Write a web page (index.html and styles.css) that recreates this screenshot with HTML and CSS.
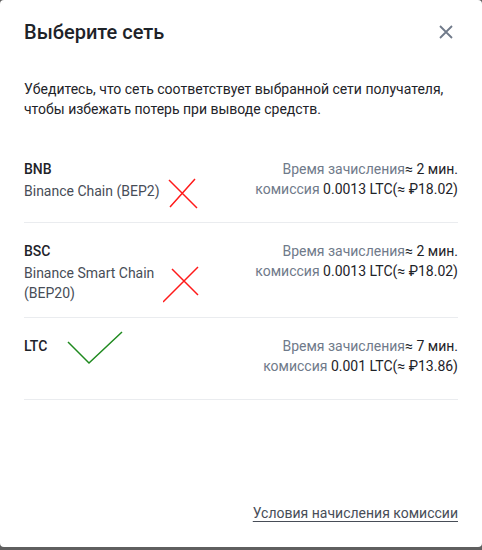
FILE: index.html
```html
<!DOCTYPE html>
<html lang="ru">
<head>
<meta charset="utf-8">
<link rel="stylesheet" href="styles.css">
</head>
<body>
<div class="modal">
  <div class="header">
    <h1 class="title">Выберите сеть</h1>
    <svg class="close" width="16" height="16" viewBox="0 0 16 16"><path d="M2 2L14 14M14 2L2 14" stroke="#707a8a" stroke-width="1.8" fill="none"/></svg>
  </div>
  <p class="note">Убедитесь, что сеть соответствует выбранной сети получателя, чтобы избежать потерь при выводе средств.</p>
  <div class="list">
    <div class="row">
      <div class="left">
        <div class="name">BNB</div>
        <div class="desc">Binance Chain (BEP2)</div>
      </div>
      <div class="right">
        <div class="line"><span class="muted">Время зачисления</span>≈ 2 мин.</div>
        <div class="line"><span class="muted">комиссия</span> 0.0013 LTC(≈ ₽18.02)</div>
      </div>
      <svg class="mark mark-x1" width="40" height="40" viewBox="0 0 40 40"><path d="M4 3L32 31M30 2L5 30" stroke="#ff1a1a" stroke-width="1.5" fill="none"/></svg>
    </div>
    <div class="row">
      <div class="left">
        <div class="name">BSC</div>
        <div class="desc">Binance Smart Chain<br>(BEP20)</div>
      </div>
      <div class="right">
        <div class="line"><span class="muted">Время зачисления</span>≈ 2 мин.</div>
        <div class="line"><span class="muted">комиссия</span> 0.0013 LTC(≈ ₽18.02)</div>
      </div>
      <svg class="mark mark-x2" width="40" height="40" viewBox="0 0 40 40"><path d="M9 4L35 30M35 2L0 37" stroke="#ff1a1a" stroke-width="1.5" fill="none"/></svg>
    </div>
    <div class="row">
      <div class="left">
        <div class="name">LTC</div>
      </div>
      <div class="right">
        <div class="line"><span class="muted">Время зачисления</span>≈ 7 мин.</div>
        <div class="line"><span class="muted">комиссия</span> 0.001 LTC(≈ ₽13.86)</div>
      </div>
      <svg class="mark mark-v" width="60" height="40" viewBox="0 0 60 40"><path d="M2 12L23 33L56 2" stroke="#1f8a1f" stroke-width="1.5" fill="none"/></svg>
    </div>
  </div>
  <div class="footer">
    <a class="link" href="#">Условия начисления комиссии</a>
  </div>
</div>
</body>
</html>
```

FILE: styles.css
```css
* { box-sizing: border-box; }
html, body { margin: 0; padding: 0; }
body {
  background: #5f5f5f;
  width: 482px;
  height: 550px;
  overflow: hidden;
  font-family: Roboto, "Noto Sans", sans-serif;
  color: #1e2329;
}
.modal {
  background: #fff;
  width: 482px;
  height: 547px;
  border-radius: 4px;
  padding: 0 24px;
  display: flex;
  flex-direction: column;
}
.header {
  display: flex;
  justify-content: space-between;
  align-items: center;
  height: 64px;
}
.title {
  margin: 0;
  font-size: 20px;
  font-weight: 500;
  line-height: 28px;
  color: #1e2329;
}
.close { margin-right: 4px; }
.note {
  margin: 15px 0 0;
  font-size: 14px;
  line-height: 20px;
  color: #1e2329;
}
.list { margin-top: 22px; }
.row {
  position: relative;
  display: flex;
  justify-content: space-between;
  min-height: 82px;
  padding: 18px 0 14px;
  border-bottom: 1px solid #eaecef;
}
.name {
  font-size: 14px;
  font-weight: 500;
  line-height: 20px;
}
.desc {
  margin-top: 2px;
  font-size: 14px;
  line-height: 20px;
  color: #474d57;
}
.right {
  text-align: right;
  font-size: 14px;
  line-height: 20px;
}
.muted { color: #707a8a; }
.mark { position: absolute; }
.mark-x1 { left: 141px; top: 36px; }
.mark-x2 { left: 139px; top: 42px; }
.mark-v { left: 42px; top: 12px; }
.footer {
  margin-top: auto;
  padding-bottom: 24px;
  display: flex;
  justify-content: flex-end;
}
.link {
  font-size: 14px;
  line-height: 20px;
  color: #474d57;
  text-decoration: underline;
  text-underline-offset: 3px;
}
```
